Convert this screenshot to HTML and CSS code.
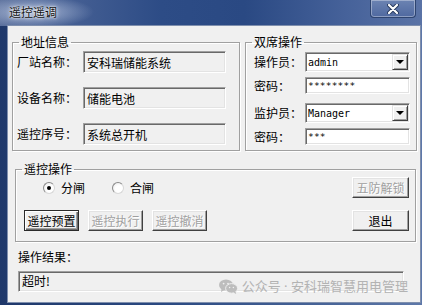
FILE: index.html
```html
<!DOCTYPE html>
<html lang="zh-CN">
<head>
  <meta charset="UTF-8" />
  <title>遥控遥调</title>
  <link rel="stylesheet" href="styles.css">
</head>
<body>

  <div class="window">
    <!-- Title bar -->
    <div class="titlebar">
      <span class="title">遥控遥调</span>
      <div class="close">
        <svg width="12" height="10" viewBox="0 0 12 10">
          <path d="M2 1 L10 9 M10 1 L2 9" stroke="#24365a" stroke-width="4" stroke-linecap="round"/>
          <path d="M2 1 L10 9 M10 1 L2 9" stroke="#fff" stroke-width="2.2" stroke-linecap="round"/>
        </svg>
      </div>
    </div>

    <div class="frame">
      <div class="client">

        <div class="top-row">
          <!-- Address info -->
          <fieldset class="group addr">
            <legend>地址信息</legend>
            <div class="addr-body">
              <div class="field">
                <span class="label">厂站名称：</span>
                <div class="box readonly">安科瑞储能系统</div>
              </div>
              <div class="field">
                <span class="label">设备名称：</span>
                <div class="box readonly">储能电池</div>
              </div>
              <div class="field">
                <span class="label">遥控序号：</span>
                <div class="box readonly">系统总开机</div>
              </div>
            </div>
          </fieldset>

          <!-- Dual operator -->
          <fieldset class="group dual">
            <legend>双席操作</legend>
            <div class="dual-body">
              <div class="field combo-row">
                <span class="label">操作员：</span>
                <div class="box combo"><span class="mono">admin</span><span class="drop"><i></i></span></div>
              </div>
              <div class="field pw-row">
                <span class="label">密码：</span>
                <div class="box pw"><span class="mono stars">********</span></div>
              </div>
              <div class="field combo-row second">
                <span class="label">监护员：</span>
                <div class="box combo"><span class="mono">Manager</span><span class="drop"><i></i></span></div>
              </div>
              <div class="field pw-row">
                <span class="label">密码：</span>
                <div class="box pw"><span class="mono stars">***</span></div>
              </div>
            </div>
          </fieldset>
        </div>

        <!-- Remote control -->
        <fieldset class="group ctrl">
          <legend>遥控操作</legend>
          <div class="ctrl-body">
            <div class="ctrl-left">
              <div class="radios">
                <span class="radio checked"><i></i></span><span class="radio-text">分闸</span>
                <span class="radio second"><i></i></span><span class="radio-text">合闸</span>
              </div>
              <div class="btn-row">
                <div class="btn default">遥控预置</div>
                <div class="btn disabled">遥控执行</div>
                <div class="btn disabled">遥控撤消</div>
              </div>
            </div>
            <div class="ctrl-right">
              <div class="btn disabled">五防解锁</div>
              <div class="btn">退出</div>
            </div>
          </div>
        </fieldset>

        <div class="result-label">操作结果：</div>
        <div class="box readonly result">超时!</div>

      </div>
    </div>

    <div class="watermark">
      <svg width="19" height="15" viewBox="0 0 19 15">
        <ellipse cx="7" cy="6" rx="7" ry="5.6" fill="#bdbdbd"/>
        <path d="M2.5 9.5 L2 13 L5.5 11 Z" fill="#bdbdbd"/>
        <ellipse cx="12.6" cy="9.4" rx="6" ry="4.8" fill="#bdbdbd" stroke="#f0f0f0" stroke-width="1"/>
        <path d="M16.5 12.5 L17.2 15 L14.5 13.6 Z" fill="#bdbdbd"/>
        <circle cx="4.6" cy="4.6" r="0.9" fill="#f0f0f0"/>
        <circle cx="9" cy="4.6" r="0.9" fill="#f0f0f0"/>
        <circle cx="10.6" cy="8.6" r="0.75" fill="#f0f0f0"/>
        <circle cx="14.4" cy="8.6" r="0.75" fill="#f0f0f0"/>
      </svg>
      <span>公众号<span class="dot"> · </span>安科瑞智慧用电管理</span>
    </div>
  </div>

</body>
</html>
```

FILE: styles.css
```css
body {
  margin: 0;
  font-family: "Noto Sans CJK SC", "Noto Sans", sans-serif;
  font-size: 12px;
  color: #000;
}

.window {
  position: relative;
  width: 422px;
  height: 305px;
  display: flex;
  flex-direction: column;
  background: linear-gradient(90deg, #1f386a 0, #2b4a82 40%, #4a6699 80%, #5e78a9 100%);
  overflow: hidden;
}

/* Title bar */
.titlebar {
  height: 26px;
  flex: none;
  display: flex;
  align-items: flex-start;
  background:
    radial-gradient(ellipse 60px 16px at 34px 12px, rgba(200, 212, 235, 0.75), rgba(200, 212, 235, 0) 100%),
    linear-gradient(90deg, #5c719d 0, #4a6396 12%, #2d4c86 38%, #2a4983 58%, #46629a 82%, #5a73a6 100%);
}

.title {
  margin: 5px 0 0 9px;
  line-height: 14px;
  color: #111;
  text-shadow: 0 0 4px #fff, 0 0 2px rgba(255, 255, 255, 0.9);
}

.close {
  margin-left: auto;
  margin-right: 6px;
  width: 44px;
  height: 17px;
  display: flex;
  align-items: center;
  justify-content: center;
  border: 1px solid #2e4470;
  border-top: none;
  border-radius: 0 0 4px 4px;
  background: linear-gradient(180deg, #6c83b2, #4f69a0);
  box-shadow: inset 0 0 0 1px rgba(255, 255, 255, 0.35);
}

/* Frame around the client area */
.frame {
  flex: 1;
  display: flex;
  padding: 0 7px 3px 8px;
}

.client {
  flex: 1;
  background: #f0f0f0;
  padding: 9px 3px 0 4px;
  box-shadow: 0 0 0 1px #7f8fad;
}

/* Group boxes */
.group {
  margin: 0;
  padding: 0;
  min-width: 0;
  border: 1px solid #a0a0a0;
  box-shadow: inset 1px 1px 0 #fff, 1px 1px 0 #fff;
}

.group legend {
  margin-left: 6px;
  padding: 0 2px;
  line-height: 14px;
}

.top-row {
  display: flex;
  gap: 5px;
}

.field {
  display: flex;
  align-items: center;
}

.label {
  line-height: 14px;
  white-space: nowrap;
}

/* Sunken edit boxes */
.box {
  box-sizing: border-box;
  display: flex;
  align-items: center;
  border: 1px solid;
  border-color: #a0a0a0 #fff #fff #a0a0a0;
  box-shadow: inset 1px 1px 0 #696969, inset -1px -1px 0 #e3e3e3;
  padding-left: 3px;
  white-space: nowrap;
}

.readonly {
  background: #f0f0f0;
}

/* Address group */
.addr {
  width: 226px;
}

.addr-body {
  padding: 2px 11px 5px 4px;
  display: flex;
  flex-direction: column;
  gap: 14px;
}

.addr .label {
  width: 66px;
}

.addr .box {
  width: 143px;
  height: 22px;
}

/* Dual operator group */
.dual {
  width: 170px;
}

.dual-body {
  padding: 3px 4px 0 8px;
}

.dual .label {
  width: 51px;
}

.dual .box {
  width: 105px;
  background: #fff;
  padding-left: 2px;
}

.mono {
  font-family: "DejaVu Sans Mono", "Liberation Mono", monospace;
  font-size: 10px;
}

.stars {
  font-size: 9.5px;
  letter-spacing: 0.2px;
}

.combo-row .box {
  height: 20px;
  padding-right: 1px;
}

.combo-row.second {
  margin-top: 9px;
}

.pw-row {
  margin-top: 5px;
}

.pw-row .box {
  height: 17px;
}

.drop {
  margin-left: auto;
  width: 16px;
  height: 16px;
  box-sizing: border-box;
  display: flex;
  align-items: center;
  justify-content: center;
  background: #f0f0f0;
  border: 1px solid;
  border-color: #e3e3e3 #404040 #404040 #e3e3e3;
  box-shadow: inset 1px 1px 0 #fff, inset -1px -1px 0 #a0a0a0;
}

.drop i {
  width: 0;
  height: 0;
  border-left: 4px solid transparent;
  border-right: 4px solid transparent;
  border-top: 4px solid #000;
}

/* Remote control group */
.ctrl {
  margin: 11px 0 0 3px;
  width: 399px;
}

.ctrl-body {
  display: flex;
  justify-content: space-between;
  padding: 1px 6px 10px 8px;
}

.ctrl-left,
.ctrl-right {
  display: flex;
  flex-direction: column;
  gap: 12px;
}

.radios {
  height: 21px;
  display: flex;
  align-items: center;
  padding-left: 19px;
}

.radio {
  width: 12px;
  height: 12px;
  box-sizing: border-box;
  border-radius: 50%;
  border: 1px solid;
  border-color: #8a8a8a #d8d8d8 #d8d8d8 #8a8a8a;
  background: radial-gradient(circle at 60% 60%, #fff 40%, #e4e4e4 100%);
  display: flex;
  align-items: center;
  justify-content: center;
}

.radio.second {
  margin-left: 27px;
}

.radio.checked i {
  width: 4px;
  height: 4px;
  border-radius: 50%;
  background: #000;
}

.radio-text {
  margin-left: 6px;
  line-height: 14px;
}

.btn-row {
  display: flex;
  gap: 9px;
}

.btn {
  box-sizing: border-box;
  width: 55px;
  height: 21px;
  display: flex;
  align-items: center;
  justify-content: center;
  background: #f0f0f0;
  border: 1px solid;
  border-color: #fff #404040 #404040 #fff;
  box-shadow: inset -1px -1px 0 #a0a0a0, inset 1px 1px 0 #e3e3e3;
  white-space: nowrap;
}

.ctrl-right .btn {
  width: 57px;
}

.btn.default {
  border-color: #2a2a2a;
  box-shadow: inset 1px 1px 0 #fff, inset -1px -1px 0 #696969, inset -2px -2px 0 #a0a0a0;
}

.btn.disabled {
  color: #a0a0a0;
  text-shadow: 1px 1px 0 #fff;
}

/* Result */
.result-label {
  margin: 8px 0 0 6px;
  line-height: 14px;
}

.result {
  margin: 7px 0 0 6px;
  width: 386px;
  height: 21px;
  align-items: flex-start;
  padding-top: 2px;
  line-height: 14px;
}

/* Watermark over the bottom right */
.watermark {
  position: absolute;
  right: 14px;
  bottom: 11px;
  display: flex;
  align-items: center;
  gap: 4px;
  color: #b3b3b3;
  font-size: 13px;
  line-height: 15px;
}

.watermark .dot {
  font-family: "Noto Sans", sans-serif;
}
```
